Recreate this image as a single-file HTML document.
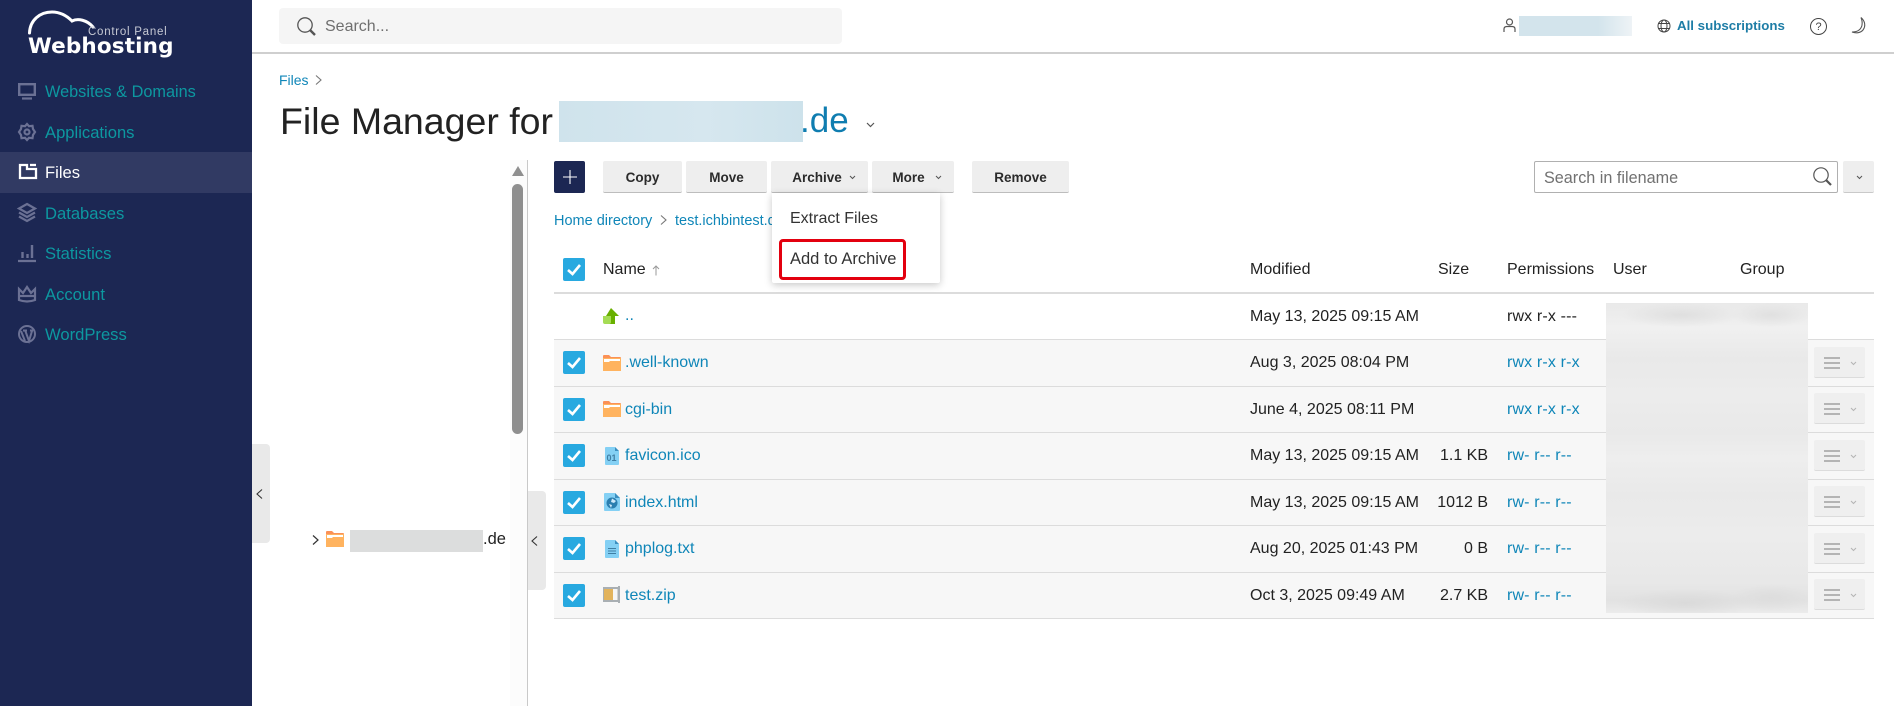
<!DOCTYPE html>
<html><head><meta charset="utf-8"><title>File Manager</title>
<style>
*{box-sizing:border-box}
html,body{margin:0;padding:0;width:1894px;height:706px;overflow:hidden;background:#fff;font-family:"Liberation Sans",sans-serif;color:#222;font-size:16px}
.a{position:absolute}
.t{position:absolute;white-space:nowrap;line-height:20px}
.nav{color:#0d98a0;left:45px;font-size:16.600px}
.l{color:#0f86b8}
.btn{position:absolute;top:161px;height:32px;background:#eee;border-bottom:1px solid #bdbdbd;border-radius:2px;text-align:center;line-height:33px;font-weight:bold;font-size:13.500px;color:#2b2b2b}
.line{position:absolute;left:554px;width:1320px;height:1px;background:#dcdcdc}
.cb{position:absolute;left:563px;width:22px;height:23px;background:#28a9e0;border-radius:2px}
.cb svg{position:absolute;left:0;top:0}
.act{position:absolute;left:1814px;width:51px;height:31px;background:#efefef;border-bottom:1px solid #dcdcdc;border-radius:2px}
.p{letter-spacing:.15px}
svg{position:absolute;overflow:visible}
</style></head><body>

<!-- sidebar -->
<div class="a" style="left:0;top:0;width:252px;height:706px;background:#1c2753"></div>
<div class="a" style="left:0;top:152px;width:252px;height:41px;background:#313a63"></div>

<!-- logo -->
<svg style="left:0;top:0" width="252" height="70" fill="none"><path d="M29.500 33C30 20 40 12 52 12C60 12 67 16 72 21C78 18 87 20 93 27" stroke="#fff" stroke-width="3" stroke-linecap="round"/></svg>
<div class="t" style="left:88px;top:22px;font-size:11.500px;letter-spacing:.75px;color:#c6c9d4">Control Panel</div>
<div class="t" style="left:28px;top:37px;font-size:21.500px;font-weight:bold;letter-spacing:.15px;color:#fff;font-family:'DejaVu Sans',sans-serif">Webhosting</div>

<!-- nav icons -->
<svg style="left:18px;top:83px" width="18" height="18" fill="none" stroke="#6b7194" stroke-width="2.400"><rect x="1.200" y="1.200" width="15.600" height="10.600"/><path d="M4 15.500H14" stroke-width="2.200"/></svg>
<svg style="left:18px;top:123px" width="18" height="18" fill="none" stroke="#6b7194" stroke-width="2.200"><path d="M9 1L11 3.200L14.500 2.800L15 6L17 9L15 12L14.500 15.200L11 14.800L9 17L7 14.800L3.500 15.200L3 12L1 9L3 6L3.500 2.800L7 3.200Z"/><circle cx="9" cy="9" r="2.500"/></svg>
<svg style="left:19px;top:164px" width="18" height="15" fill="none" stroke="#fff" stroke-width="2.300"><path d="M1 14V1H8V5H17V14Z"/><path d="M11 1H17"/></svg>
<svg style="left:18px;top:203px" width="18" height="19" fill="none" stroke="#6b7194" stroke-width="2.200"><path d="M9 1L17 5.500L9 10L1 5.500Z"/><path d="M1 9.500L9 14L17 9.500"/><path d="M1 13.500L9 18L17 13.500"/></svg>
<svg style="left:18px;top:244px" width="18" height="18" fill="none" stroke="#6b7194"><path d="M0 17H18" stroke-width="2.200"/><path d="M4.500 8V14M9.500 10V14M14 1V14" stroke-width="2.400"/></svg>
<svg style="left:18px;top:285px" width="18" height="18" fill="none" stroke="#6b7194" stroke-width="2.200"><path d="M1 4L5 8L9 2L13 8L17 4V15Q9 18 1 15Z"/><path d="M1 11H17"/></svg>
<svg style="left:18px;top:325px" width="18" height="18" fill="none" stroke="#6b7194" stroke-width="2"><circle cx="9" cy="9" r="8"/><path d="M3 6L7 16M7 5L11 16L14 6M5 5.500H9M12 5.500H15"/></svg>

<div class="t nav" style="top:82px;font-size:16.300px">Websites &amp; Domains</div>
<div class="t nav" style="top:123px">Applications</div>
<div class="t" style="left:45px;top:162.500px;color:#fff;font-size:16.600px">Files</div>
<div class="t nav" style="top:203.500px">Databases</div>
<div class="t nav" style="top:243.500px">Statistics</div>
<div class="t nav" style="top:284.500px">Account</div>
<div class="t nav" style="top:324.500px">WordPress</div>

<!-- topbar -->
<div class="a" style="left:252px;top:52px;width:1642px;height:2px;background:#cfcfcf"></div>
<div class="a" style="left:279px;top:8px;width:563px;height:36px;background:#f5f5f5;border-radius:4px"></div>
<svg style="left:297px;top:17px" width="19" height="19" fill="none" stroke="#555" stroke-width="1.300"><circle cx="8" cy="8" r="7.200"/><path d="M13 13L18 18" stroke-width="2.400"/></svg>
<div class="t" style="left:325px;top:16.500px;color:#6f6f6f;font-size:16px">Search...</div>

<svg style="left:1503px;top:18px" width="13" height="15" fill="none" stroke="#555" stroke-width="1.200"><circle cx="6.500" cy="4" r="3"/><path d="M1 14V11Q1 8.500 4 8.500H9Q12 8.500 12 11V14"/></svg>
<div class="a" style="left:1519px;top:16px;width:113px;height:20px;background:linear-gradient(90deg,#d3e4ec 0%,#d3e4ec 70%,#eef3f6 100%)"></div>
<svg style="left:1657px;top:19px" width="14" height="14" fill="none" stroke="#444" stroke-width="1"><circle cx="7" cy="7" r="6"/><ellipse cx="7" cy="7" rx="3" ry="6"/><path d="M1 4.500H13M1 9.500H13"/></svg>
<div class="t" style="left:1677px;top:16px;color:#1e7da6;font-weight:bold;font-size:13.300px">All subscriptions</div>
<svg style="left:1810px;top:18px" width="17" height="17" fill="none" stroke="#444" stroke-width="1"><circle cx="8.500" cy="8.500" r="8"/></svg>
<div class="t" style="left:1810px;top:16.500px;width:17px;text-align:center;font-size:11px;color:#444">?</div>
<svg style="left:1851px;top:17px" width="16" height="17" fill="none" stroke="#555" stroke-width="1.100"><path d="M10 0.500C14 4 15 9 12 13C9.500 16 5 16.500 1 15C6 15 9.500 13 10.800 9C11.600 6 11 3 10 0.500Z"/></svg>

<!-- title -->
<div class="t l" style="left:279px;top:70px;font-size:14px">Files</div>
<svg style="left:315px;top:75px" width="7" height="10" fill="none" stroke="#777" stroke-width="1.100"><path d="M1 0.500L6 5L1 9.500"/></svg>
<div class="t" style="left:280px;top:100px;font-size:37.500px;line-height:42px;color:#222">File Manager for</div>
<div class="a" style="left:559px;top:101px;width:244px;height:41px;background:linear-gradient(90deg,#cfe3ec,#d6e7ef 60%,#cde2eb)"></div>
<div class="t" style="left:800px;top:100px;font-size:35px;line-height:42px;color:#0f7db0">.de</div>
<svg style="left:866px;top:122px" width="9" height="6" fill="none" stroke="#555" stroke-width="1.200"><path d="M1 1L4.500 4.500L8 1"/></svg>

<!-- tree pane -->
<div class="a" style="left:527px;top:160px;width:1px;height:546px;background:#c9c9c9"></div>
<div class="a" style="left:510px;top:160px;width:17px;height:546px;background:#fcfcfc"></div>
<svg style="left:511px;top:166px" width="14" height="11" fill="#8f8f8f"><path d="M7 0L13 10H1Z"/></svg>
<div class="a" style="left:512px;top:184px;width:11px;height:250px;background:#8f8f8f;border-radius:6px"></div>
<div class="a" style="left:252px;top:444px;width:18px;height:99px;background:#e9e9e9;border-radius:0 4px 4px 0"></div>
<svg style="left:256px;top:489px" width="7" height="10" fill="none" stroke="#333" stroke-width="1.100"><path d="M6 0.500L1 5L6 9.500"/></svg>
<div class="a" style="left:528px;top:491px;width:18px;height:99px;background:#e9e9e9;border-radius:0 4px 4px 0"></div>
<svg style="left:531px;top:536px" width="7" height="10" fill="none" stroke="#333" stroke-width="1.100"><path d="M6 0.500L1 5L6 9.500"/></svg>
<svg style="left:312px;top:535px" width="7" height="10" fill="none" stroke="#333" stroke-width="1.200"><path d="M1 0.500L6 5L1 9.500"/></svg>
<svg style="left:326px;top:531px" width="18" height="16"><path d="M0 1Q0 0 1 0H6L8 2H17Q18 2 18 3V16H0Z" fill="#fb9157"/><rect y="3" width="18" height="13" fill="#ffb35f"/><path d="M1 4H17V6H7L6 7H1Z" fill="#fff"/></svg>
<div class="a" style="left:350px;top:530px;width:133px;height:22px;background:#dcdddd"></div>
<div class="t" style="left:483px;top:529px;font-size:16.500px;color:#222">.de</div>

<!-- toolbar -->
<div class="a" style="left:554px;top:161px;width:31px;height:32px;background:#1c2753;border-radius:2px"></div>
<svg style="left:562.500px;top:170px" width="14" height="14" stroke="#fff" stroke-width="1.100"><path d="M7 0V14M0 7H14"/></svg>
<div class="btn" style="left:603px;width:79px">Copy</div>
<div class="btn" style="left:686px;width:81px">Move</div>
<div class="btn" style="left:771px;width:97px;padding-right:5px">Archive</div>
<svg style="left:849px;top:175px" width="7" height="5" fill="none" stroke="#555"><path d="M1 1L3.500 3.500L6 1"/></svg>
<div class="btn" style="left:872px;width:82px;padding-right:9px">More</div>
<svg style="left:935px;top:175px" width="7" height="5" fill="none" stroke="#555"><path d="M1 1L3.500 3.500L6 1"/></svg>
<div class="btn" style="left:972px;width:97px">Remove</div>

<div class="a" style="left:1534px;top:161px;width:304px;height:32px;border:1px solid #b0b0b0;border-radius:2px;background:#fff"></div>
<div class="t" style="left:1544px;top:167.500px;font-size:16.200px;color:#717171">Search in filename</div>
<svg style="left:1813px;top:167px" width="19" height="19" fill="none" stroke="#555" stroke-width="1.200"><circle cx="8" cy="8" r="7.200"/><path d="M13 13L18 18" stroke-width="2.200"/></svg>
<div class="a" style="left:1843px;top:161px;width:31px;height:32px;background:#eee;border-bottom:1px solid #c9c9c9;border-radius:2px"></div>
<svg style="left:1856px;top:175px" width="7" height="5" fill="none" stroke="#555"><path d="M1 1L3.500 3.500L6 1"/></svg>

<!-- path -->
<div class="t l" style="left:554px;top:210.500px;font-size:14.500px">Home directory</div>
<svg style="left:660px;top:215px" width="7" height="10" fill="none" stroke="#777" stroke-width="1.100"><path d="M1 0.500L6 5L1 9.500"/></svg>
<div class="t l" style="left:675px;top:210.500px;font-size:14.500px">test.ichbintest.de</div>

<!-- table header -->
<div class="cb" style="top:258px"><svg width="22" height="23" fill="none" stroke="#fff" stroke-width="2.600"><path d="M5 12L9.500 16L17 7"/></svg></div>
<div class="t" style="left:603px;top:260px">Name</div>
<svg style="left:652px;top:265px" width="8" height="11" fill="none" stroke="#999" stroke-width="1"><path d="M4 10.500V1M1 4L4 1L7 4"/></svg>
<div class="t" style="left:1250px;top:260px">Modified</div>
<div class="t" style="left:1438px;top:260px">Size</div>
<div class="t" style="left:1507px;top:260px">Permissions</div>
<div class="t" style="left:1613px;top:260px">User</div>
<div class="t" style="left:1740px;top:260px">Group</div>
<div class="a" style="left:554px;top:292px;width:1320px;height:2px;background:#dcdcdc"></div>

<!-- rows bg -->
<div class="a" style="left:554px;top:339px;width:1320px;height:280px;background:#f7f7f7"></div>
<div class="line" style="top:339px"></div>
<div class="line" style="top:386px"></div>
<div class="line" style="top:432px"></div>
<div class="line" style="top:479px"></div>
<div class="line" style="top:525px"></div>
<div class="line" style="top:572px"></div>
<div class="line" style="top:618px"></div>

<!-- up row -->
<svg style="left:603px;top:308px" width="16" height="17"><path d="M8 0L16 8H12V16H4V8H3Z" fill="#69b000"/><path d="M0 8H8V14Q8 16 6 16H2Q0 16 0 14Z" fill="#a5dc55"/></svg>
<div class="t l" style="left:625px;top:306px">..</div>
<div class="t" style="left:1250px;top:307px">May 13, 2025 09:15 AM</div>
<div class="t p" style="left:1507px;top:307px">rwx r-x ---</div>

<!-- checkboxes -->
<div class="cb" style="top:351px"><svg width="22" height="23" fill="none" stroke="#fff" stroke-width="2.600"><path d="M5 12L9.500 16L17 7"/></svg></div>
<div class="cb" style="top:398px"><svg width="22" height="23" fill="none" stroke="#fff" stroke-width="2.600"><path d="M5 12L9.500 16L17 7"/></svg></div>
<div class="cb" style="top:444px"><svg width="22" height="23" fill="none" stroke="#fff" stroke-width="2.600"><path d="M5 12L9.500 16L17 7"/></svg></div>
<div class="cb" style="top:491px"><svg width="22" height="23" fill="none" stroke="#fff" stroke-width="2.600"><path d="M5 12L9.500 16L17 7"/></svg></div>
<div class="cb" style="top:537px"><svg width="22" height="23" fill="none" stroke="#fff" stroke-width="2.600"><path d="M5 12L9.500 16L17 7"/></svg></div>
<div class="cb" style="top:584px"><svg width="22" height="23" fill="none" stroke="#fff" stroke-width="2.600"><path d="M5 12L9.500 16L17 7"/></svg></div>

<!-- file icons -->
<svg style="left:603px;top:355px" width="18" height="16"><path d="M0 1Q0 0 1 0H6L8 2H17Q18 2 18 3V16H0Z" fill="#fb9157"/><rect y="3" width="18" height="13" fill="#ffb35f"/><path d="M1 4H17V6H7L6 7H1Z" fill="#fff"/></svg>
<svg style="left:603px;top:401px" width="18" height="16"><path d="M0 1Q0 0 1 0H6L8 2H17Q18 2 18 3V16H0Z" fill="#fb9157"/><rect y="3" width="18" height="13" fill="#ffb35f"/><path d="M1 4H17V6H7L6 7H1Z" fill="#fff"/></svg>
<svg style="left:605px;top:447px" width="14" height="18"><path d="M1 0H10L14 4V17Q14 18 13 18H1Q0 18 0 17V1Q0 0 1 0Z" fill="#84d0f4"/><path d="M10 0L14 4H10Z" fill="#3b8fc0"/><text x="1.500" y="14" font-size="9" font-weight="bold" fill="#3f7ea3" font-family="Liberation Sans">01</text></svg>
<svg style="left:604px;top:493px" width="16" height="18"><path d="M1 0H11L16 5V17Q16 18 15 18H1Q0 18 0 17V1Q0 0 1 0Z" fill="#84d0f4"/><path d="M11 0L16 5H11Z" fill="#3b8fc0"/><circle cx="8" cy="10" r="5.500" fill="#2b7fb0"/><path d="M8 5.500L12 8L10 10L7 9ZM5 11L8 12L7 15Z" fill="#cfeafa"/></svg>
<svg style="left:605px;top:540px" width="14" height="18"><path d="M1 0H10L14 4V17Q14 18 13 18H1Q0 18 0 17V1Q0 0 1 0Z" fill="#84d0f4"/><path d="M10 0L14 4H10Z" fill="#3b8fc0"/><path d="M3 8.500H11M3 11H11M3 13.500H11" stroke="#3f7ea3" stroke-width="1"/></svg>
<svg style="left:603px;top:586px" width="17" height="17"><rect x="0" y="1" width="17" height="15" fill="#a9afb3"/><rect x="1" y="3" width="9" height="11" fill="#e2b35c"/><rect x="10" y="3" width="4.500" height="11" fill="#f5f5f5"/><rect x="15" y="0" width="2" height="17" fill="#a9afb3"/></svg>

<!-- names -->
<div class="t l" style="left:625px;top:353px">.well-known</div>
<div class="t l" style="left:625px;top:400px">cgi-bin</div>
<div class="t l" style="left:625px;top:446px">favicon.ico</div>
<div class="t l" style="left:625px;top:493px">index.html</div>
<div class="t l" style="left:625px;top:539px">phplog.txt</div>
<div class="t l" style="left:625px;top:586px">test.zip</div>

<!-- dates -->
<div class="t" style="left:1250px;top:353px">Aug 3, 2025 08:04 PM</div>
<div class="t" style="left:1250px;top:400px">June 4, 2025 08:11 PM</div>
<div class="t" style="left:1250px;top:446px">May 13, 2025 09:15 AM</div>
<div class="t" style="left:1250px;top:493px">May 13, 2025 09:15 AM</div>
<div class="t" style="left:1250px;top:539px">Aug 20, 2025 01:43 PM</div>
<div class="t" style="left:1250px;top:586px">Oct 3, 2025 09:49 AM</div>

<!-- sizes -->
<div class="t" style="right:406px;top:446px">1.1 KB</div>
<div class="t" style="right:406px;top:493px">1012 B</div>
<div class="t" style="right:406px;top:539px">0 B</div>
<div class="t" style="right:406px;top:586px">2.7 KB</div>

<!-- perms -->
<div class="t l p" style="left:1507px;top:353px">rwx r-x r-x</div>
<div class="t l p" style="left:1507px;top:400px">rwx r-x r-x</div>
<div class="t l p" style="left:1507px;top:446px">rw- r-- r--</div>
<div class="t l p" style="left:1507px;top:493px">rw- r-- r--</div>
<div class="t l p" style="left:1507px;top:539px">rw- r-- r--</div>
<div class="t l p" style="left:1507px;top:586px">rw- r-- r--</div>

<!-- blurred user/group -->
<div class="a" style="left:1606px;top:303px;width:202px;height:310px;background:radial-gradient(ellipse 60px 12px at 75px 12px,#dfdfdf,transparent),radial-gradient(ellipse 40px 12px at 165px 12px,#e0e0e0,transparent),radial-gradient(ellipse 70px 14px at 80px 300px,#dadada,transparent),radial-gradient(ellipse 40px 14px at 165px 295px,#dddddd,transparent),linear-gradient(180deg,#e9e9e9 0,#f0f0f0 8%,#e9e9e9 18%,#ececec 30%,#e9e9e9 42%,#eeeeee 50%,#e9e9e9 62%,#ececec 75%,#e8e8e8 90%,#e2e2e2 96%,#ebebeb 100%)"></div>

<!-- action buttons -->
<div class="act" style="top:347px"></div>
<div class="act" style="top:393px"></div>
<div class="act" style="top:440px"></div>
<div class="act" style="top:486px"></div>
<div class="act" style="top:533px"></div>
<div class="act" style="top:579px"></div>
<svg style="left:1824px;top:357px" width="36" height="12" fill="none" stroke="#b4b4b4" stroke-width="2"><path d="M0 1H16M0 6H16M0 11H16"/><path d="M27 5L29.500 7.500L32 5" stroke-width="1"/></svg>
<svg style="left:1824px;top:403px" width="36" height="12" fill="none" stroke="#b4b4b4" stroke-width="2"><path d="M0 1H16M0 6H16M0 11H16"/><path d="M27 5L29.500 7.500L32 5" stroke-width="1"/></svg>
<svg style="left:1824px;top:450px" width="36" height="12" fill="none" stroke="#b4b4b4" stroke-width="2"><path d="M0 1H16M0 6H16M0 11H16"/><path d="M27 5L29.500 7.500L32 5" stroke-width="1"/></svg>
<svg style="left:1824px;top:496px" width="36" height="12" fill="none" stroke="#b4b4b4" stroke-width="2"><path d="M0 1H16M0 6H16M0 11H16"/><path d="M27 5L29.500 7.500L32 5" stroke-width="1"/></svg>
<svg style="left:1824px;top:543px" width="36" height="12" fill="none" stroke="#b4b4b4" stroke-width="2"><path d="M0 1H16M0 6H16M0 11H16"/><path d="M27 5L29.500 7.500L32 5" stroke-width="1"/></svg>
<svg style="left:1824px;top:589px" width="36" height="12" fill="none" stroke="#b4b4b4" stroke-width="2"><path d="M0 1H16M0 6H16M0 11H16"/><path d="M27 5L29.500 7.500L32 5" stroke-width="1"/></svg>

<!-- dropdown -->
<div class="a" style="left:772px;top:193px;width:168px;height:90px;background:#fff;box-shadow:0 2px 8px rgba(0,0,0,.22);border-radius:0 0 2px 2px"></div>
<div class="t" style="left:790px;top:208.500px;font-size:16px;color:#333">Extract Files</div>
<div class="a" style="left:779px;top:239px;width:127px;height:41px;border:3px solid #e3000f;border-radius:4px"></div>
<div class="t" style="left:790px;top:248.500px;font-size:16.500px;color:#333">Add to Archive</div>

</body></html>
